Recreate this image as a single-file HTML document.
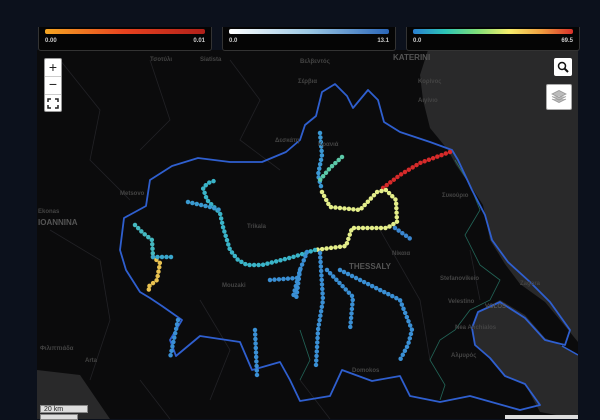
<!DOCTYPE html>
<html><head><meta charset="utf-8"><style>
html,body{margin:0;padding:0;width:600px;height:419px;overflow:hidden;background:#0c111c;font-family:"Liberation Sans","Noto Sans CJK SC",sans-serif}
.map{position:absolute;left:37px;top:50px;width:541px;height:369px;background:#0b0b0c;overflow:hidden}
.leg{position:absolute;top:27px;height:24px;width:174px;background:#050505;border:1px solid #333;border-top:none;border-radius:0 0 3px 3px;box-sizing:border-box}
.leg .bar{position:absolute;left:6px;right:6px;top:2px;height:5px;border-radius:2px}
.leg span{position:absolute;top:11px;font-size:6px;color:#ccc;font-weight:bold}
.btn{position:absolute;background:#fff;border-radius:2px;color:#222;text-align:center}
</style></head><body>
<div class="map">
<svg width="541" height="369" viewBox="37 50 541 369" xmlns="http://www.w3.org/2000/svg">
<g fill="#29292a">
<polygon points="428,50 578,50 578,342 560,320 545,302 520,284 505,264 490,240 483,205 470,185 456,165 448,150 430,128 423,100 420,75"/>
<polygon points="478,312 500,300 525,315 545,338 562,346 578,355 578,419 540,412 525,384 505,376 490,358 475,345 472,326"/>
<polygon points="37,370 80,375 110,419 37,419"/>
</g>
<g fill="none" stroke="#222226" stroke-width="0.8">
<path d="M60,60 L100,110 L90,160 L130,200 M150,60 L170,120 L140,150 M230,60 L260,100 L240,140 L280,170 M50,230 L100,260 L110,320 L90,380 M200,300 L230,350 L210,400 M380,230 L420,300 L430,360 M470,250 L480,300 M300,380 L330,419 M140,380 L170,419"/>
</g>
<path d="M455,160 L470,185 L480,210 L465,235 L480,265 L500,280 L490,300 L470,310 L455,330 L440,340 L430,360 L445,385 L440,400 M300,330 L310,360 L300,380" fill="none" stroke="#2e8f7a" stroke-width="0.8" opacity="0.7"/>
<path d="M322,92 L335,84 L347,96 L353,108 L368,90 L378,100 L384,122 L400,132 L430,142 L452,150 L458,160 L472,190 L485,215 L492,240 L508,262 L530,282 L550,302 L570,330 L565,345 L545,340 L525,318 L500,302 L478,312 L472,328 L475,345 L490,358 L505,376 L525,384 L540,405 L520,410 L470,396 L440,402 L410,396 L400,376 L372,381 L342,370 L330,396 L300,401 L290,380 L280,362 L252,370 L240,342 L200,336 L176,356 L170,340 L182,320 L162,306 L150,298 L140,292 L126,270 L120,250 L124,218 L146,206 L150,180 L172,166 L198,158 L230,162 L262,162 L286,152 L300,140 L305,125 L316,116 L320,100 Z" fill="none" stroke="#2f5fcf" stroke-width="1.8" stroke-linejoin="round"/>
<path d="M578,355 L562,346" fill="none" stroke="#2f5fcf" stroke-width="1.5"/>
<g fill="none" stroke-width="4.5" stroke-linecap="round" stroke-dasharray="0 4.5">
<path d="M450,152 L420,163 L400,175 L383,188" stroke="#d62a2a"/>
<path d="M320,133 L322,155 L318,175 L322,190" stroke="#3b98d4"/>
<path d="M342,157 L330,168 L320,180" stroke="#5cc9a8"/>
<path d="M322,192 L330,207 L360,210 L377,192 L386,190 L396,200 L397,222 L387,228 L352,228 L346,246 L315,250" stroke="#e4ee8a"/>
<path d="M395,228 L412,240" stroke="#3a86d0"/>
<path d="M315,250 L293,257 L262,265 L247,265 L238,260 L230,250 L223,227 L220,213 L207,200 L203,188 L208,183 L217,180" stroke="#3ab4c8"/>
<path d="M188,202 L210,207 L220,210" stroke="#3a9ad0"/>
<path d="M135,225 L143,233 L152,240 L153,257" stroke="#45b8c0"/>
<path d="M153,257 L160,263 L157,280 L148,287 L150,293" stroke="#e8c150"/>
<path d="M153,257 L175,257" stroke="#3aa6cc"/>
<path d="M307,252 L300,270 L293,297 M270,280 L297,278 M320,253 L323,300 L318,330 L316,365 M327,270 L353,297 L350,330 M340,270 L370,285 L400,300 L412,330 L408,345 L400,360 M255,330 L257,375 M178,320 L170,358 M300,270 L296,300" stroke="#3a8fd4"/>
</g>
<g font-size="6" fill="#444" font-weight="bold">
<text x="150" y="61">Τσοτύλι</text><text x="200" y="61">Siatista</text>
<text x="300" y="63">Βελβεντός</text><text x="298" y="83">Σέρβια</text>
<text x="418" y="83">Κορίνος</text><text x="418" y="102">Αιγίνιο</text>
<text x="275" y="142">Δεσκάτη</text><text x="318" y="146">Κρανιά</text>
<text x="38" y="213">Ekonas</text><text x="38" y="225" font-size="8" fill="#555">IOANNINA</text>
<text x="442" y="197">Συκούριο</text><text x="392" y="255">Νίκαια</text>
<text x="349" y="269" font-size="8" fill="#555">THESSALY</text>
<text x="247" y="228">Trikala</text><text x="222" y="287">Mouzaki</text>
<text x="440" y="280">Stefanovikeio</text><text x="448" y="303">Velestino</text>
<text x="485" y="308" fill="#555">VOLOS</text><text x="455" y="329">Nea Anchialos</text>
<text x="451" y="357">Αλμυρός</text><text x="352" y="372">Domokos</text>
<text x="520" y="285">Zagora</text><text x="40" y="350">Φιλιππιάδα</text>
<text x="85" y="362">Arta</text><text x="120" y="195">Metsovo</text>
</g>
<text x="393" y="60" font-size="8" fill="#555" font-weight="bold">KATERINI</text>
</svg>
</div>
<div class="leg" style="left:38px"><div class="bar" style="background:linear-gradient(90deg,#f5a623,#e8421f,#b0201a)"></div><span style="left:6px">0.00</span><span style="right:6px">0.01</span></div>
<div class="leg" style="left:222px"><div class="bar" style="background:linear-gradient(90deg,#fff,#9cc8e4,#2a66b8)"></div><span style="left:6px">0.0</span><span style="right:6px">13.1</span></div>
<div class="leg" style="left:406px"><div class="bar" style="background:linear-gradient(90deg,#2a7fd0,#2cc6b8,#7fe07a,#f6ee6c,#f0a040,#d9302a)"></div><span style="left:6px">0.0</span><span style="right:6px">69.5</span></div>
<div style="position:absolute;left:44px;top:58px;width:18px;height:54px;background:#fff;border-radius:2px;border:1px solid #999;box-sizing:border-box">
<div style="height:17px;font-size:14px;line-height:17px;text-align:center;color:#222;border-bottom:1px solid #ccc">+</div>
<div style="height:17px;font-size:14px;line-height:15px;text-align:center;color:#222;border-bottom:1px solid #ccc">−</div>
<svg width="16" height="17" viewBox="0 0 16 17"><path d="M3,7 V4 H6 M10,4 H13 V7 M13,10 V13 H10 M6,13 H3 V10" fill="none" stroke="#222" stroke-width="1.5"/></svg>
</div>
<div class="btn" style="left:554px;top:58px;width:18px;height:18px"><svg width="18" height="18"><circle cx="8" cy="8" r="3.5" fill="none" stroke="#111" stroke-width="1.5"/><path d="M10.5,10.5 L14,14" stroke="#111" stroke-width="2"/></svg></div>
<div class="btn" style="left:546px;top:84px;width:26px;height:26px;border:1px solid #aaa;box-sizing:border-box"><svg width="24" height="24"><path d="M5,14 L12,17.5 L19,14 M5,11.5 L12,15 L19,11.5 M5,9 L12,5.5 L19,9 L12,12.5 Z" fill="#bbb" stroke="#999" stroke-width="0.8"/></svg></div>
<div style="position:absolute;left:40px;top:405px;width:48px;height:8px;background:#ddd;border:1px solid #888;font-size:7px;line-height:8px;color:#222;padding-left:3px;box-sizing:border-box">20 km</div>
<div style="position:absolute;left:40px;top:414px;width:38px;height:6px;background:#ddd;border:1px solid #888;box-sizing:border-box"></div>
<div style="position:absolute;left:505px;top:415px;width:73px;height:4px;background:#ddd"></div>
</body></html>
